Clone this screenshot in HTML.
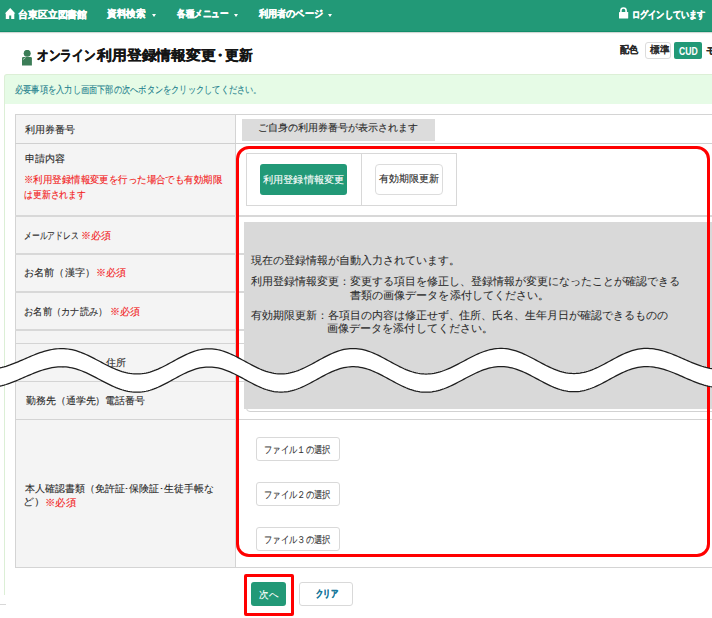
<!DOCTYPE html>
<html><head><meta charset="utf-8">
<style>
html,body{margin:0;padding:0;}
body{width:712px;height:618px;overflow:hidden;position:relative;background:#fff;font-family:"Liberation Sans",sans-serif;color:#222;}
.a{position:absolute;}
.tx{position:absolute;white-space:nowrap;line-height:14px;transform-origin:0 0;}
.caret{position:absolute;width:0;height:0;border-left:2.5px solid transparent;border-right:2.5px solid transparent;border-top:3px solid #fff;}
.hl{position:absolute;height:1px;background:#d4d4d4;}
.btnw{position:absolute;background:#fff;border:1px solid #d9d9d9;border-radius:3px;box-sizing:border-box;}
.btng{position:absolute;background:#229977;border-radius:3px;box-sizing:border-box;}
body.measure{overflow:visible;width:900px;}
body.measure *{visibility:hidden !important;}
body.measure .tx.on{visibility:visible !important;color:#000 !important;-webkit-text-stroke-color:#000 !important;}
</style></head><body>

<div class="a" style="left:0;top:0;width:712px;height:31px;background:#229977;border-bottom:1px solid #118d6a;box-shadow:0 1px 1px rgba(0,40,20,0.18);"></div>
<svg class="a" style="left:4px;top:7px" width="12" height="13" viewBox="0 0 12 13"><path d="M6.2 1 L11.4 6.6 L10.3 6.6 L10.3 11.9 L7.2 11.9 L7.2 8.6 L5.2 8.6 L5.2 11.9 L1.8 11.9 L1.8 6.6 L0.9 6.6 Z" fill="#fff"/></svg>
<div class="caret" style="left:152px;top:14px;"></div>
<div class="caret" style="left:233.5px;top:14px;"></div>
<div class="caret" style="left:327.5px;top:14px;"></div>
<svg class="a" style="left:618px;top:7px" width="11" height="12" viewBox="0 0 11 12"><path d="M2.9 5.5 V3.6 A2.6 2.6 0 0 1 8.1 3.6 V5.5" stroke="#fff" stroke-width="1.6" fill="none"/><rect x="1" y="5" width="9.2" height="6.6" rx="0.6" fill="#fff"/></svg>

<svg class="a" style="left:22px;top:50px" width="11" height="16" viewBox="0 0 11 16"><circle cx="5.2" cy="3.3" r="3.5" fill="#3b7d57"/><path d="M0 8.2 Q0 7 1.2 7 H8.7 Q9.9 7 9.9 8.2 V15.4 H0 Z" fill="#3b7d57"/><path d="M0.9 9.6 L3.6 7.6" stroke="#b9d6c0" stroke-width="0.9"/></svg>

<div class="btnw" style="left:645px;top:42px;width:26px;height:17px;border-color:#dcdcdc;"></div>
<div class="btng" style="left:674px;top:42px;width:28px;height:17px;border-radius:2px;"></div>

<!-- panel -->
<div class="a" style="left:4px;top:90px;width:1px;height:505px;background:#dcefd6;"></div>
<div class="a" style="left:4px;top:74px;width:720px;height:30px;background:#e6fbe6;border:1px solid #dcefd6;border-bottom:none;border-radius:3px 3px 0 0;box-sizing:border-box;"></div>

<!-- table -->
<div class="a" style="left:15px;top:114px;width:700px;height:454px;background:#fff;border:1px solid #d4d4d4;box-sizing:border-box;"></div>
<div class="a" style="left:16px;top:115px;width:219px;height:452px;background:#f4f4f4;"></div>
<div class="a" style="left:235px;top:114px;width:1px;height:454px;background:#d4d4d4;"></div>
<div class="hl" style="left:15px;top:143px;width:697px;background:#d0d0d0;"></div>
<div class="hl" style="left:15px;top:215px;width:697px;height:2px;background:#d8d8d8;"></div>
<div class="hl" style="left:15px;top:253px;width:697px;height:2px;background:#d8d8d8;"></div>
<div class="hl" style="left:15px;top:291px;width:697px;height:2px;background:#d8d8d8;"></div>
<div class="hl" style="left:15px;top:329px;width:697px;height:2px;background:#d8d8d8;"></div>
<div class="hl" style="left:15px;top:343px;width:697px;"></div>
<div class="hl" style="left:15px;top:381px;width:697px;"></div>
<div class="hl" style="left:15px;top:419px;width:697px;"></div>

<!-- readonly input -->
<div class="a" style="left:242px;top:119px;width:193px;height:22px;background:#dcdcdc;"></div>

<!-- tabs -->
<div class="a" style="left:246px;top:153px;width:211px;height:53px;border:1px solid #d8d8d8;box-sizing:border-box;"></div>
<div class="a" style="left:361px;top:153px;width:1px;height:53px;background:#d8d8d8;"></div>
<div class="btng" style="left:260px;top:164px;width:87px;height:31px;"></div>
<div class="btnw" style="left:375px;top:164px;width:68px;height:31px;border-color:#dcdcdc;border-radius:4px;"></div>

<!-- textarea + gray overlay -->
<div class="a" style="left:246px;top:222px;width:480px;height:190px;border:1px solid #d2d2d2;border-radius:4px;box-sizing:border-box;"></div>
<div class="a" style="left:244px;top:222px;width:480px;height:187px;background:#d9d9d9;"></div>

<!-- file buttons -->
<div class="btnw" style="left:256px;top:437px;width:84px;height:24px;"></div>
<div class="btnw" style="left:256px;top:482px;width:84px;height:24px;"></div>
<div class="btnw" style="left:256px;top:527px;width:84px;height:24px;"></div>

<!-- bottom -->
<div class="a" style="left:0px;top:604px;width:6px;height:1px;background:#d8d8d8;"></div>
<div class="btng" style="left:251px;top:582px;width:35px;height:24px;"></div>
<div class="btnw" style="left:299px;top:582px;width:54px;height:24px;"></div>

<div class="tx" id="n1" style="left:17.99px;top:7.70px;font-size:10px;color:#fff;font-weight:bold;-webkit-text-stroke:0.3px #fff;transform:scaleX(0.9892);">台東区立図書館</div>
<div class="tx" id="n2" style="left:107.43px;top:7.10px;font-size:10px;color:#fff;font-weight:bold;-webkit-text-stroke:0.3px #fff;transform:scaleX(0.9609);">資料検索</div>
<div class="tx" id="n3" style="left:176.77px;top:7.10px;font-size:10px;color:#fff;font-weight:bold;-webkit-text-stroke:0.3px #fff;transform:scaleX(0.8541);">各種メニュー</div>
<div class="tx" id="n4" style="left:258.56px;top:7.10px;font-size:10px;color:#fff;font-weight:bold;-webkit-text-stroke:0.3px #fff;transform:scaleX(0.9107);">利用者のページ</div>
<div class="tx" id="n5" style="left:631.72px;top:7.70px;font-size:10px;color:#fff;font-weight:bold;-webkit-text-stroke:0.3px #fff;transform:scaleX(0.8161);">ログインしています</div>
<div class="tx" id="ti1" style="left:37.08px;top:47.70px;font-size:14px;color:#151515;font-weight:bold;-webkit-text-stroke:0.3px #151515;transform:scaleX(0.8334);">オンライン</div>
<div class="tx" id="ti2" style="left:97.00px;top:47.70px;font-size:14px;color:#151515;font-weight:bold;-webkit-text-stroke:0.3px #151515;transform:scaleX(1.0607);">利用登録情報変更</div>
<div class="tx" id="ti3" style="left:213.20px;top:48.20px;font-size:14px;color:#151515;font-weight:bold;-webkit-text-stroke:0.3px #151515;">・</div>
<div class="tx" id="ti4" style="left:224.60px;top:48.20px;font-size:14px;color:#151515;font-weight:bold;-webkit-text-stroke:0.3px #151515;transform:scaleX(0.9787);">更新</div>
<div class="tx" id="c1" style="left:620.00px;top:43.20px;font-size:10px;color:#2a2a2a;font-weight:bold;-webkit-text-stroke:0.15px #2a2a2a;transform:scaleX(0.9126);">配色</div>
<div class="tx" id="c2" style="left:649.63px;top:43.20px;font-size:10px;color:#222;font-weight:normal;-webkit-text-stroke:0.45px #222;transform:scaleX(0.9585);">標準</div>
<div class="tx" id="c3" style="left:678.71px;top:44.60px;font-size:10px;color:#fff;font-weight:bold;-webkit-text-stroke:0.05px #fff;transform:scaleX(0.8624);">CUD</div>
<div class="tx" id="c4" style="left:705.80px;top:44.00px;font-size:10px;color:#2a2a2a;font-weight:bold;-webkit-text-stroke:0.15px #2a2a2a;">モ</div>
<div class="tx" id="al" style="left:14.92px;top:82.70px;font-size:10px;color:#1c7f8c;-webkit-text-stroke:0.1px #1c7f8c;transform:scaleX(0.8220);">必要事項を入力し画面下部の次へボタンをクリックしてください。</div>
<div class="tx" id="l1" style="left:25.38px;top:122.50px;font-size:10px;color:#2a2a2a;-webkit-text-stroke:0.1px #2a2a2a;transform:scaleX(1.0049);">利用券番号</div>
<div class="tx" id="l2" style="left:25.34px;top:152.30px;font-size:10px;color:#2a2a2a;-webkit-text-stroke:0.1px #2a2a2a;transform:scaleX(1.0054);">申請内容</div>
<div class="tx" id="l3" style="left:24.06px;top:173.30px;font-size:10px;color:#f21d1d;-webkit-text-stroke:0.12px #f21d1d;transform:scaleX(0.9426);">※利用登録情報変更を行った場合でも有効期限</div>
<div class="tx" id="l4" style="left:24.47px;top:187.70px;font-size:10px;color:#f21d1d;-webkit-text-stroke:0.12px #f21d1d;transform:scaleX(0.8834);">は更新されます</div>
<div class="tx" id="l5" style="left:24.29px;top:228.70px;font-size:10px;color:#2a2a2a;-webkit-text-stroke:0.1px #2a2a2a;transform:scaleX(0.7797);">メールアドレス</div>
<div class="tx" id="l5r" style="left:81.00px;top:228.70px;font-size:10px;color:#f21d1d;-webkit-text-stroke:0.12px #f21d1d;transform:scaleX(1.0048);">※必須</div>
<div class="tx" id="l6" style="left:24.07px;top:266.40px;font-size:10px;color:#2a2a2a;-webkit-text-stroke:0.1px #2a2a2a;transform:scaleX(1.0161);">お名前（漢字）</div>
<div class="tx" id="l6r" style="left:95.67px;top:266.40px;font-size:10px;color:#f21d1d;-webkit-text-stroke:0.12px #f21d1d;transform:scaleX(1.0054);">※必須</div>
<div class="tx" id="l7" style="left:24.16px;top:304.70px;font-size:10px;color:#2a2a2a;-webkit-text-stroke:0.1px #2a2a2a;transform:scaleX(0.9283);">お名前（カナ読み）</div>
<div class="tx" id="l7r" style="left:110.00px;top:304.70px;font-size:10px;color:#f21d1d;-webkit-text-stroke:0.12px #f21d1d;transform:scaleX(1.0048);">※必須</div>
<div class="tx" id="l8" style="left:56.00px;top:356.00px;font-size:10px;color:#2a2a2a;-webkit-text-stroke:0.1px #2a2a2a;">郵便番号・住所</div>
<div class="tx" id="l9" style="left:26.39px;top:393.70px;font-size:10px;color:#2a2a2a;-webkit-text-stroke:0.1px #2a2a2a;transform:scaleX(0.9918);">勤務先（通学先）電話番号</div>
<div class="tx" id="l10" style="left:25.30px;top:481.50px;font-size:10px;color:#2a2a2a;-webkit-text-stroke:0.1px #2a2a2a;transform:scaleX(0.9947);">本人確認書類（免許証･保険証･生徒手帳な</div>
<div class="tx" id="l11" style="left:23.06px;top:495.20px;font-size:10px;color:#2a2a2a;-webkit-text-stroke:0.1px #2a2a2a;transform:scaleX(1.0978);">ど）</div>
<div class="tx" id="l11r" style="left:44.96px;top:495.70px;font-size:10px;color:#f21d1d;-webkit-text-stroke:0.12px #f21d1d;transform:scaleX(1.0387);">※必須</div>
<div class="tx" id="ro" style="left:258.29px;top:121.00px;font-size:10px;color:#2a2a2a;-webkit-text-stroke:0.1px #2a2a2a;transform:scaleX(1.0003);">ご自身の利用券番号が表示されます</div>
<div class="tx" id="tb1" style="left:263.28px;top:173.00px;font-size:10px;color:#fff;-webkit-text-stroke:0.1px #fff;transform:scaleX(1.0135);">利用登録情報変更</div>
<div class="tx" id="tb2" style="left:379.33px;top:171.80px;font-size:10px;color:#2a2a2a;-webkit-text-stroke:0.1px #2a2a2a;transform:scaleX(1.0014);">有効期限更新</div>
<div class="tx" id="g1" style="left:251.41px;top:253.00px;font-size:11px;color:#2a2a2a;font-weight:normal;-webkit-text-stroke:0.05px #2a2a2a;">現在の登録情報が自動入力されています。</div>
<div class="tx" id="g2" style="left:251.40px;top:273.90px;font-size:11px;color:#2a2a2a;font-weight:normal;-webkit-text-stroke:0.05px #2a2a2a;">利用登録情報変更：変更する項目を修正し、登録情報が変更になったことが確認できる</div>
<div class="tx" id="g3" style="left:350.30px;top:287.50px;font-size:11px;color:#2a2a2a;font-weight:normal;-webkit-text-stroke:0.05px #2a2a2a;transform:scaleX(1.0053);">書類の画像データを添付してください。</div>
<div class="tx" id="g4" style="left:251.40px;top:308.30px;font-size:11px;color:#2a2a2a;font-weight:normal;-webkit-text-stroke:0.05px #2a2a2a;transform:scaleX(0.9976);">有効期限更新：各項目の内容は修正せず、住所、氏名、生年月日が確認できるものの</div>
<div class="tx" id="g5" style="left:327.40px;top:321.40px;font-size:11px;color:#2a2a2a;font-weight:normal;-webkit-text-stroke:0.05px #2a2a2a;transform:scaleX(1.0064);">画像データを添付してください。</div>
<div class="tx" id="f1" style="left:263.92px;top:442.90px;font-size:10px;color:#333;-webkit-text-stroke:0.1px #333;transform:scaleX(0.8338);">ファイル１の選択</div>
<div class="tx" id="f2" style="left:263.92px;top:487.60px;font-size:10px;color:#333;-webkit-text-stroke:0.1px #333;transform:scaleX(0.8338);">ファイル２の選択</div>
<div class="tx" id="f3" style="left:263.92px;top:532.50px;font-size:10px;color:#333;-webkit-text-stroke:0.1px #333;transform:scaleX(0.8338);">ファイル３の選択</div>
<div class="tx" id="b1" style="left:259.27px;top:587.50px;font-size:10px;color:#fff;-webkit-text-stroke:0.1px #fff;transform:scaleX(0.9567);">次へ</div>
<div class="tx" id="b2" style="left:315.54px;top:587.00px;font-size:10px;color:#1a7a9c;font-weight:bold;-webkit-text-stroke:0.35px #1a7a9c;transform:scaleX(0.7279);">クリア</div>

<!-- red rounded rects -->
<div class="a" style="left:236px;top:146px;width:474px;height:411px;border:3px solid #ff0000;border-radius:13px;box-sizing:border-box;"></div>
<div class="a" style="left:244px;top:574px;width:50px;height:42px;border:3px solid #ff0000;border-radius:2px;box-sizing:border-box;"></div>

<!-- wave -->
<svg class="a" style="left:0;top:330px" width="712" height="80" viewBox="0 330 712 80">
<path d="M-10.0 369.32 L-8.0 369.17 L-6.0 368.96 L-4.0 368.67 L-2.0 368.32 L0.0 367.90 L2.0 367.41 L4.0 366.87 L6.0 366.28 L8.0 365.63 L10.0 364.94 L12.0 364.20 L14.0 363.43 L16.0 362.63 L18.0 361.80 L20.0 360.95 L22.0 360.09 L24.0 359.22 L26.0 358.35 L28.0 357.48 L30.0 356.63 L32.0 355.79 L34.0 354.97 L36.0 354.18 L38.0 353.43 L40.0 352.71 L42.0 352.04 L44.0 351.42 L46.0 350.85 L48.0 350.34 L50.0 349.89 L52.0 349.50 L54.0 349.18 L56.0 348.93 L58.0 348.75 L60.0 348.64 L62.0 348.60 L64.0 348.64 L66.0 348.78 L68.0 349.00 L70.0 349.31 L72.0 349.70 L74.0 350.17 L76.0 350.72 L78.0 351.35 L80.0 352.04 L82.0 352.80 L84.0 353.62 L86.0 354.49 L88.0 355.42 L90.0 356.38 L92.0 357.38 L94.0 358.40 L96.0 359.44 L98.0 360.50 L100.0 361.57 L102.0 362.63 L104.0 363.68 L106.0 364.72 L108.0 365.73 L110.0 366.71 L112.0 367.65 L114.0 368.55 L116.0 369.40 L118.0 370.19 L120.0 370.91 L122.0 371.57 L124.0 372.16 L126.0 372.68 L128.0 373.11 L130.0 373.46 L132.0 373.72 L134.0 373.90 L136.0 373.99 L138.0 373.99 L140.0 373.89 L142.0 373.70 L144.0 373.42 L146.0 373.04 L148.0 372.58 L150.0 372.03 L152.0 371.40 L154.0 370.69 L156.0 369.91 L158.0 369.07 L160.0 368.17 L162.0 367.22 L164.0 366.22 L166.0 365.19 L168.0 364.13 L170.0 363.04 L172.0 361.95 L174.0 360.85 L176.0 359.76 L178.0 358.67 L180.0 357.61 L182.0 356.58 L184.0 355.58 L186.0 354.63 L188.0 353.73 L190.0 352.89 L192.0 352.11 L194.0 351.40 L196.0 350.77 L198.0 350.22 L200.0 349.76 L202.0 349.38 L204.0 349.10 L206.0 348.91 L208.0 348.81 L210.0 348.81 L212.0 348.91 L214.0 349.10 L216.0 349.38 L218.0 349.76 L220.0 350.22 L222.0 350.77 L224.0 351.39 L226.0 352.10 L228.0 352.87 L230.0 353.71 L232.0 354.61 L234.0 355.56 L236.0 356.55 L238.0 357.58 L240.0 358.63 L242.0 359.71 L244.0 360.80 L246.0 361.90 L248.0 362.99 L250.0 364.07 L252.0 365.12 L254.0 366.15 L256.0 367.14 L258.0 368.09 L260.0 368.99 L262.0 369.83 L264.0 370.60 L266.0 371.31 L268.0 371.93 L270.0 372.48 L272.0 372.94 L274.0 373.32 L276.0 373.60 L278.0 373.79 L280.0 373.89 L282.0 373.89 L284.0 373.79 L286.0 373.60 L288.0 373.31 L290.0 372.93 L292.0 372.47 L294.0 371.91 L296.0 371.28 L298.0 370.56 L300.0 369.78 L302.0 368.93 L304.0 368.02 L306.0 367.06 L308.0 366.06 L310.0 365.02 L312.0 363.95 L314.0 362.86 L316.0 361.75 L318.0 360.65 L320.0 359.54 L322.0 358.45 L324.0 357.38 L326.0 356.34 L328.0 355.34 L330.0 354.38 L332.0 353.47 L334.0 352.62 L336.0 351.84 L338.0 351.12 L340.0 350.49 L342.0 349.93 L344.0 349.47 L346.0 349.09 L348.0 348.80 L350.0 348.61 L352.0 348.51 L354.0 348.51 L356.0 348.61 L358.0 348.79 L360.0 349.07 L362.0 349.44 L364.0 349.90 L366.0 350.44 L368.0 351.07 L370.0 351.76 L372.0 352.53 L374.0 353.36 L376.0 354.25 L378.0 355.19 L380.0 356.18 L382.0 357.21 L384.0 358.26 L386.0 359.34 L388.0 360.43 L390.0 361.52 L392.0 362.62 L394.0 363.70 L396.0 364.77 L398.0 365.81 L400.0 366.82 L402.0 367.78 L404.0 368.70 L406.0 369.56 L408.0 370.36 L410.0 371.09 L412.0 371.76 L414.0 372.34 L416.0 372.84 L418.0 373.25 L420.0 373.58 L422.0 373.81 L424.0 373.95 L426.0 374.00 L428.0 373.96 L430.0 373.82 L432.0 373.60 L434.0 373.29 L436.0 372.89 L438.0 372.42 L440.0 371.86 L442.0 371.23 L444.0 370.53 L446.0 369.76 L448.0 368.94 L450.0 368.06 L452.0 367.13 L454.0 366.16 L456.0 365.16 L458.0 364.12 L460.0 363.07 L462.0 362.00 L464.0 360.93 L466.0 359.86 L468.0 358.80 L470.0 357.76 L472.0 356.74 L474.0 355.75 L476.0 354.80 L478.0 353.89 L480.0 353.04 L482.0 352.24 L484.0 351.51 L486.0 350.84 L488.0 350.25 L490.0 349.73 L492.0 349.30 L494.0 348.95 L496.0 348.68 L498.0 348.50 L500.0 348.41 L502.0 348.41 L504.0 348.50 L506.0 348.69 L508.0 348.97 L510.0 349.33 L512.0 349.78 L514.0 350.31 L516.0 350.93 L518.0 351.61 L520.0 352.37 L522.0 353.19 L524.0 354.06 L526.0 354.99 L528.0 355.96 L530.0 356.97 L532.0 358.01 L534.0 359.07 L536.0 360.14 L538.0 361.22 L540.0 362.30 L542.0 363.37 L544.0 364.42 L546.0 365.44 L548.0 366.43 L550.0 367.38 L552.0 368.28 L554.0 369.13 L556.0 369.92 L558.0 370.64 L560.0 371.29 L562.0 371.86 L564.0 372.36 L566.0 372.76 L568.0 373.08 L570.0 373.31 L572.0 373.45 L574.0 373.50 L576.0 373.45 L578.0 373.31 L580.0 373.07 L582.0 372.74 L584.0 372.32 L586.0 371.82 L588.0 371.23 L590.0 370.56 L592.0 369.82 L594.0 369.02 L596.0 368.15 L598.0 367.23 L600.0 366.25 L602.0 365.24 L604.0 364.20 L606.0 363.13 L608.0 362.04 L610.0 360.95 L612.0 359.86 L614.0 358.77 L616.0 357.70 L618.0 356.66 L620.0 355.65 L622.0 354.68 L624.0 353.75 L626.0 352.88 L628.0 352.08 L630.0 351.34 L632.0 350.67 L634.0 350.08 L636.0 349.58 L638.0 349.16 L640.0 348.83 L642.0 348.59 L644.0 348.45 L646.0 348.40 L648.0 348.44 L650.0 348.55 L652.0 348.73 L654.0 348.98 L656.0 349.31 L658.0 349.70 L660.0 350.15 L662.0 350.67 L664.0 351.25 L666.0 351.87 L668.0 352.55 L670.0 353.27 L672.0 354.04 L674.0 354.83 L676.0 355.66 L678.0 356.50 L680.0 357.37 L682.0 358.24 L684.0 359.12 L686.0 360.00 L688.0 360.87 L690.0 361.72 L692.0 362.56 L694.0 363.37 L696.0 364.15 L698.0 364.89 L700.0 365.59 L702.0 366.25 L704.0 366.85 L706.0 367.39 L708.0 367.88 L710.0 368.30 L712.0 368.66 L714.0 368.95 L716.0 369.17 L718.0 369.32 L720.0 369.39 L722.0 369.40 L724.0 369.40 L724.0 387.60 L722.0 387.60 L720.0 387.59 L718.0 387.52 L716.0 387.37 L714.0 387.15 L712.0 386.86 L710.0 386.50 L708.0 386.08 L706.0 385.59 L704.0 385.05 L702.0 384.45 L700.0 383.79 L698.0 383.09 L696.0 382.35 L694.0 381.57 L692.0 380.76 L690.0 379.92 L688.0 379.07 L686.0 378.20 L684.0 377.32 L682.0 376.44 L680.0 375.57 L678.0 374.70 L676.0 373.86 L674.0 373.03 L672.0 372.24 L670.0 371.47 L668.0 370.75 L666.0 370.07 L664.0 369.45 L662.0 368.87 L660.0 368.35 L658.0 367.90 L656.0 367.51 L654.0 367.18 L652.0 366.93 L650.0 366.75 L648.0 366.64 L646.0 366.60 L644.0 366.65 L642.0 366.79 L640.0 367.03 L638.0 367.36 L636.0 367.78 L634.0 368.28 L632.0 368.87 L630.0 369.54 L628.0 370.28 L626.0 371.08 L624.0 371.95 L622.0 372.88 L620.0 373.85 L618.0 374.86 L616.0 375.90 L614.0 376.97 L612.0 378.06 L610.0 379.15 L608.0 380.24 L606.0 381.33 L604.0 382.40 L602.0 383.44 L600.0 384.45 L598.0 385.43 L596.0 386.35 L594.0 387.22 L592.0 388.02 L590.0 388.76 L588.0 389.43 L586.0 390.02 L584.0 390.52 L582.0 390.94 L580.0 391.27 L578.0 391.51 L576.0 391.65 L574.0 391.70 L572.0 391.65 L570.0 391.51 L568.0 391.28 L566.0 390.96 L564.0 390.56 L562.0 390.06 L560.0 389.49 L558.0 388.84 L556.0 388.12 L554.0 387.33 L552.0 386.48 L550.0 385.58 L548.0 384.63 L546.0 383.64 L544.0 382.62 L542.0 381.57 L540.0 380.50 L538.0 379.42 L536.0 378.34 L534.0 377.27 L532.0 376.21 L530.0 375.17 L528.0 374.16 L526.0 373.19 L524.0 372.26 L522.0 371.39 L520.0 370.57 L518.0 369.81 L516.0 369.13 L514.0 368.51 L512.0 367.98 L510.0 367.53 L508.0 367.17 L506.0 366.89 L504.0 366.70 L502.0 366.61 L500.0 366.61 L498.0 366.70 L496.0 366.88 L494.0 367.15 L492.0 367.50 L490.0 367.93 L488.0 368.45 L486.0 369.04 L484.0 369.71 L482.0 370.44 L480.0 371.24 L478.0 372.09 L476.0 373.00 L474.0 373.95 L472.0 374.94 L470.0 375.96 L468.0 377.00 L466.0 378.06 L464.0 379.13 L462.0 380.20 L460.0 381.27 L458.0 382.32 L456.0 383.36 L454.0 384.36 L452.0 385.33 L450.0 386.26 L448.0 387.14 L446.0 387.96 L444.0 388.73 L442.0 389.43 L440.0 390.06 L438.0 390.62 L436.0 391.09 L434.0 391.49 L432.0 391.80 L430.0 392.02 L428.0 392.16 L426.0 392.20 L424.0 392.15 L422.0 392.01 L420.0 391.78 L418.0 391.45 L416.0 391.04 L414.0 390.54 L412.0 389.96 L410.0 389.29 L408.0 388.56 L406.0 387.76 L404.0 386.90 L402.0 385.98 L400.0 385.02 L398.0 384.01 L396.0 382.97 L394.0 381.90 L392.0 380.82 L390.0 379.72 L388.0 378.63 L386.0 377.54 L384.0 376.46 L382.0 375.41 L380.0 374.38 L378.0 373.39 L376.0 372.45 L374.0 371.56 L372.0 370.73 L370.0 369.96 L368.0 369.27 L366.0 368.64 L364.0 368.10 L362.0 367.64 L360.0 367.27 L358.0 366.99 L356.0 366.81 L354.0 366.71 L352.0 366.71 L350.0 366.81 L348.0 367.00 L346.0 367.29 L344.0 367.67 L342.0 368.13 L340.0 368.69 L338.0 369.32 L336.0 370.04 L334.0 370.82 L332.0 371.67 L330.0 372.58 L328.0 373.54 L326.0 374.54 L324.0 375.58 L322.0 376.65 L320.0 377.74 L318.0 378.85 L316.0 379.95 L314.0 381.06 L312.0 382.15 L310.0 383.22 L308.0 384.26 L306.0 385.26 L304.0 386.22 L302.0 387.13 L300.0 387.98 L298.0 388.76 L296.0 389.48 L294.0 390.11 L292.0 390.67 L290.0 391.13 L288.0 391.51 L286.0 391.80 L284.0 391.99 L282.0 392.09 L280.0 392.09 L278.0 391.99 L276.0 391.80 L274.0 391.52 L272.0 391.14 L270.0 390.68 L268.0 390.13 L266.0 389.51 L264.0 388.80 L262.0 388.03 L260.0 387.19 L258.0 386.29 L256.0 385.34 L254.0 384.35 L252.0 383.32 L250.0 382.27 L248.0 381.19 L246.0 380.10 L244.0 379.00 L242.0 377.91 L240.0 376.83 L238.0 375.78 L236.0 374.75 L234.0 373.76 L232.0 372.81 L230.0 371.91 L228.0 371.07 L226.0 370.30 L224.0 369.59 L222.0 368.97 L220.0 368.42 L218.0 367.96 L216.0 367.58 L214.0 367.30 L212.0 367.11 L210.0 367.01 L208.0 367.01 L206.0 367.11 L204.0 367.30 L202.0 367.58 L200.0 367.96 L198.0 368.42 L196.0 368.97 L194.0 369.60 L192.0 370.31 L190.0 371.09 L188.0 371.93 L186.0 372.83 L184.0 373.78 L182.0 374.78 L180.0 375.81 L178.0 376.87 L176.0 377.96 L174.0 379.05 L172.0 380.15 L170.0 381.24 L168.0 382.33 L166.0 383.39 L164.0 384.42 L162.0 385.42 L160.0 386.37 L158.0 387.27 L156.0 388.11 L154.0 388.89 L152.0 389.60 L150.0 390.23 L148.0 390.78 L146.0 391.24 L144.0 391.62 L142.0 391.90 L140.0 392.09 L138.0 392.19 L136.0 392.19 L134.0 392.10 L132.0 391.92 L130.0 391.66 L128.0 391.31 L126.0 390.88 L124.0 390.36 L122.0 389.77 L120.0 389.11 L118.0 388.39 L116.0 387.60 L114.0 386.75 L112.0 385.85 L110.0 384.91 L108.0 383.93 L106.0 382.92 L104.0 381.88 L102.0 380.83 L100.0 379.77 L98.0 378.70 L96.0 377.64 L94.0 376.60 L92.0 375.58 L90.0 374.58 L88.0 373.62 L86.0 372.69 L84.0 371.82 L82.0 371.00 L80.0 370.24 L78.0 369.55 L76.0 368.92 L74.0 368.37 L72.0 367.90 L70.0 367.51 L68.0 367.20 L66.0 366.98 L64.0 366.84 L62.0 366.80 L60.0 366.84 L58.0 366.95 L56.0 367.13 L54.0 367.38 L52.0 367.70 L50.0 368.09 L48.0 368.54 L46.0 369.05 L44.0 369.62 L42.0 370.24 L40.0 370.91 L38.0 371.63 L36.0 372.38 L34.0 373.17 L32.0 373.99 L30.0 374.83 L28.0 375.68 L26.0 376.55 L24.0 377.42 L22.0 378.29 L20.0 379.15 L18.0 380.00 L16.0 380.83 L14.0 381.63 L12.0 382.40 L10.0 383.14 L8.0 383.83 L6.0 384.48 L4.0 385.07 L2.0 385.61 L0.0 386.10 L-2.0 386.52 L-4.0 386.87 L-6.0 387.16 L-8.0 387.37 L-10.0 387.52 Z" fill="#fff"/>
<path d="M-10.0 369.32 L-8.0 369.17 L-6.0 368.96 L-4.0 368.67 L-2.0 368.32 L0.0 367.90 L2.0 367.41 L4.0 366.87 L6.0 366.28 L8.0 365.63 L10.0 364.94 L12.0 364.20 L14.0 363.43 L16.0 362.63 L18.0 361.80 L20.0 360.95 L22.0 360.09 L24.0 359.22 L26.0 358.35 L28.0 357.48 L30.0 356.63 L32.0 355.79 L34.0 354.97 L36.0 354.18 L38.0 353.43 L40.0 352.71 L42.0 352.04 L44.0 351.42 L46.0 350.85 L48.0 350.34 L50.0 349.89 L52.0 349.50 L54.0 349.18 L56.0 348.93 L58.0 348.75 L60.0 348.64 L62.0 348.60 L64.0 348.64 L66.0 348.78 L68.0 349.00 L70.0 349.31 L72.0 349.70 L74.0 350.17 L76.0 350.72 L78.0 351.35 L80.0 352.04 L82.0 352.80 L84.0 353.62 L86.0 354.49 L88.0 355.42 L90.0 356.38 L92.0 357.38 L94.0 358.40 L96.0 359.44 L98.0 360.50 L100.0 361.57 L102.0 362.63 L104.0 363.68 L106.0 364.72 L108.0 365.73 L110.0 366.71 L112.0 367.65 L114.0 368.55 L116.0 369.40 L118.0 370.19 L120.0 370.91 L122.0 371.57 L124.0 372.16 L126.0 372.68 L128.0 373.11 L130.0 373.46 L132.0 373.72 L134.0 373.90 L136.0 373.99 L138.0 373.99 L140.0 373.89 L142.0 373.70 L144.0 373.42 L146.0 373.04 L148.0 372.58 L150.0 372.03 L152.0 371.40 L154.0 370.69 L156.0 369.91 L158.0 369.07 L160.0 368.17 L162.0 367.22 L164.0 366.22 L166.0 365.19 L168.0 364.13 L170.0 363.04 L172.0 361.95 L174.0 360.85 L176.0 359.76 L178.0 358.67 L180.0 357.61 L182.0 356.58 L184.0 355.58 L186.0 354.63 L188.0 353.73 L190.0 352.89 L192.0 352.11 L194.0 351.40 L196.0 350.77 L198.0 350.22 L200.0 349.76 L202.0 349.38 L204.0 349.10 L206.0 348.91 L208.0 348.81 L210.0 348.81 L212.0 348.91 L214.0 349.10 L216.0 349.38 L218.0 349.76 L220.0 350.22 L222.0 350.77 L224.0 351.39 L226.0 352.10 L228.0 352.87 L230.0 353.71 L232.0 354.61 L234.0 355.56 L236.0 356.55 L238.0 357.58 L240.0 358.63 L242.0 359.71 L244.0 360.80 L246.0 361.90 L248.0 362.99 L250.0 364.07 L252.0 365.12 L254.0 366.15 L256.0 367.14 L258.0 368.09 L260.0 368.99 L262.0 369.83 L264.0 370.60 L266.0 371.31 L268.0 371.93 L270.0 372.48 L272.0 372.94 L274.0 373.32 L276.0 373.60 L278.0 373.79 L280.0 373.89 L282.0 373.89 L284.0 373.79 L286.0 373.60 L288.0 373.31 L290.0 372.93 L292.0 372.47 L294.0 371.91 L296.0 371.28 L298.0 370.56 L300.0 369.78 L302.0 368.93 L304.0 368.02 L306.0 367.06 L308.0 366.06 L310.0 365.02 L312.0 363.95 L314.0 362.86 L316.0 361.75 L318.0 360.65 L320.0 359.54 L322.0 358.45 L324.0 357.38 L326.0 356.34 L328.0 355.34 L330.0 354.38 L332.0 353.47 L334.0 352.62 L336.0 351.84 L338.0 351.12 L340.0 350.49 L342.0 349.93 L344.0 349.47 L346.0 349.09 L348.0 348.80 L350.0 348.61 L352.0 348.51 L354.0 348.51 L356.0 348.61 L358.0 348.79 L360.0 349.07 L362.0 349.44 L364.0 349.90 L366.0 350.44 L368.0 351.07 L370.0 351.76 L372.0 352.53 L374.0 353.36 L376.0 354.25 L378.0 355.19 L380.0 356.18 L382.0 357.21 L384.0 358.26 L386.0 359.34 L388.0 360.43 L390.0 361.52 L392.0 362.62 L394.0 363.70 L396.0 364.77 L398.0 365.81 L400.0 366.82 L402.0 367.78 L404.0 368.70 L406.0 369.56 L408.0 370.36 L410.0 371.09 L412.0 371.76 L414.0 372.34 L416.0 372.84 L418.0 373.25 L420.0 373.58 L422.0 373.81 L424.0 373.95 L426.0 374.00 L428.0 373.96 L430.0 373.82 L432.0 373.60 L434.0 373.29 L436.0 372.89 L438.0 372.42 L440.0 371.86 L442.0 371.23 L444.0 370.53 L446.0 369.76 L448.0 368.94 L450.0 368.06 L452.0 367.13 L454.0 366.16 L456.0 365.16 L458.0 364.12 L460.0 363.07 L462.0 362.00 L464.0 360.93 L466.0 359.86 L468.0 358.80 L470.0 357.76 L472.0 356.74 L474.0 355.75 L476.0 354.80 L478.0 353.89 L480.0 353.04 L482.0 352.24 L484.0 351.51 L486.0 350.84 L488.0 350.25 L490.0 349.73 L492.0 349.30 L494.0 348.95 L496.0 348.68 L498.0 348.50 L500.0 348.41 L502.0 348.41 L504.0 348.50 L506.0 348.69 L508.0 348.97 L510.0 349.33 L512.0 349.78 L514.0 350.31 L516.0 350.93 L518.0 351.61 L520.0 352.37 L522.0 353.19 L524.0 354.06 L526.0 354.99 L528.0 355.96 L530.0 356.97 L532.0 358.01 L534.0 359.07 L536.0 360.14 L538.0 361.22 L540.0 362.30 L542.0 363.37 L544.0 364.42 L546.0 365.44 L548.0 366.43 L550.0 367.38 L552.0 368.28 L554.0 369.13 L556.0 369.92 L558.0 370.64 L560.0 371.29 L562.0 371.86 L564.0 372.36 L566.0 372.76 L568.0 373.08 L570.0 373.31 L572.0 373.45 L574.0 373.50 L576.0 373.45 L578.0 373.31 L580.0 373.07 L582.0 372.74 L584.0 372.32 L586.0 371.82 L588.0 371.23 L590.0 370.56 L592.0 369.82 L594.0 369.02 L596.0 368.15 L598.0 367.23 L600.0 366.25 L602.0 365.24 L604.0 364.20 L606.0 363.13 L608.0 362.04 L610.0 360.95 L612.0 359.86 L614.0 358.77 L616.0 357.70 L618.0 356.66 L620.0 355.65 L622.0 354.68 L624.0 353.75 L626.0 352.88 L628.0 352.08 L630.0 351.34 L632.0 350.67 L634.0 350.08 L636.0 349.58 L638.0 349.16 L640.0 348.83 L642.0 348.59 L644.0 348.45 L646.0 348.40 L648.0 348.44 L650.0 348.55 L652.0 348.73 L654.0 348.98 L656.0 349.31 L658.0 349.70 L660.0 350.15 L662.0 350.67 L664.0 351.25 L666.0 351.87 L668.0 352.55 L670.0 353.27 L672.0 354.04 L674.0 354.83 L676.0 355.66 L678.0 356.50 L680.0 357.37 L682.0 358.24 L684.0 359.12 L686.0 360.00 L688.0 360.87 L690.0 361.72 L692.0 362.56 L694.0 363.37 L696.0 364.15 L698.0 364.89 L700.0 365.59 L702.0 366.25 L704.0 366.85 L706.0 367.39 L708.0 367.88 L710.0 368.30 L712.0 368.66 L714.0 368.95 L716.0 369.17 L718.0 369.32 L720.0 369.39 L722.0 369.40 L724.0 369.40" fill="none" stroke="#1e1e1e" stroke-width="1.25"/>
<path d="M-10.0 387.52 L-8.0 387.37 L-6.0 387.16 L-4.0 386.87 L-2.0 386.52 L0.0 386.10 L2.0 385.61 L4.0 385.07 L6.0 384.48 L8.0 383.83 L10.0 383.14 L12.0 382.40 L14.0 381.63 L16.0 380.83 L18.0 380.00 L20.0 379.15 L22.0 378.29 L24.0 377.42 L26.0 376.55 L28.0 375.68 L30.0 374.83 L32.0 373.99 L34.0 373.17 L36.0 372.38 L38.0 371.63 L40.0 370.91 L42.0 370.24 L44.0 369.62 L46.0 369.05 L48.0 368.54 L50.0 368.09 L52.0 367.70 L54.0 367.38 L56.0 367.13 L58.0 366.95 L60.0 366.84 L62.0 366.80 L64.0 366.84 L66.0 366.98 L68.0 367.20 L70.0 367.51 L72.0 367.90 L74.0 368.37 L76.0 368.92 L78.0 369.55 L80.0 370.24 L82.0 371.00 L84.0 371.82 L86.0 372.69 L88.0 373.62 L90.0 374.58 L92.0 375.58 L94.0 376.60 L96.0 377.64 L98.0 378.70 L100.0 379.77 L102.0 380.83 L104.0 381.88 L106.0 382.92 L108.0 383.93 L110.0 384.91 L112.0 385.85 L114.0 386.75 L116.0 387.60 L118.0 388.39 L120.0 389.11 L122.0 389.77 L124.0 390.36 L126.0 390.88 L128.0 391.31 L130.0 391.66 L132.0 391.92 L134.0 392.10 L136.0 392.19 L138.0 392.19 L140.0 392.09 L142.0 391.90 L144.0 391.62 L146.0 391.24 L148.0 390.78 L150.0 390.23 L152.0 389.60 L154.0 388.89 L156.0 388.11 L158.0 387.27 L160.0 386.37 L162.0 385.42 L164.0 384.42 L166.0 383.39 L168.0 382.33 L170.0 381.24 L172.0 380.15 L174.0 379.05 L176.0 377.96 L178.0 376.87 L180.0 375.81 L182.0 374.78 L184.0 373.78 L186.0 372.83 L188.0 371.93 L190.0 371.09 L192.0 370.31 L194.0 369.60 L196.0 368.97 L198.0 368.42 L200.0 367.96 L202.0 367.58 L204.0 367.30 L206.0 367.11 L208.0 367.01 L210.0 367.01 L212.0 367.11 L214.0 367.30 L216.0 367.58 L218.0 367.96 L220.0 368.42 L222.0 368.97 L224.0 369.59 L226.0 370.30 L228.0 371.07 L230.0 371.91 L232.0 372.81 L234.0 373.76 L236.0 374.75 L238.0 375.78 L240.0 376.83 L242.0 377.91 L244.0 379.00 L246.0 380.10 L248.0 381.19 L250.0 382.27 L252.0 383.32 L254.0 384.35 L256.0 385.34 L258.0 386.29 L260.0 387.19 L262.0 388.03 L264.0 388.80 L266.0 389.51 L268.0 390.13 L270.0 390.68 L272.0 391.14 L274.0 391.52 L276.0 391.80 L278.0 391.99 L280.0 392.09 L282.0 392.09 L284.0 391.99 L286.0 391.80 L288.0 391.51 L290.0 391.13 L292.0 390.67 L294.0 390.11 L296.0 389.48 L298.0 388.76 L300.0 387.98 L302.0 387.13 L304.0 386.22 L306.0 385.26 L308.0 384.26 L310.0 383.22 L312.0 382.15 L314.0 381.06 L316.0 379.95 L318.0 378.85 L320.0 377.74 L322.0 376.65 L324.0 375.58 L326.0 374.54 L328.0 373.54 L330.0 372.58 L332.0 371.67 L334.0 370.82 L336.0 370.04 L338.0 369.32 L340.0 368.69 L342.0 368.13 L344.0 367.67 L346.0 367.29 L348.0 367.00 L350.0 366.81 L352.0 366.71 L354.0 366.71 L356.0 366.81 L358.0 366.99 L360.0 367.27 L362.0 367.64 L364.0 368.10 L366.0 368.64 L368.0 369.27 L370.0 369.96 L372.0 370.73 L374.0 371.56 L376.0 372.45 L378.0 373.39 L380.0 374.38 L382.0 375.41 L384.0 376.46 L386.0 377.54 L388.0 378.63 L390.0 379.72 L392.0 380.82 L394.0 381.90 L396.0 382.97 L398.0 384.01 L400.0 385.02 L402.0 385.98 L404.0 386.90 L406.0 387.76 L408.0 388.56 L410.0 389.29 L412.0 389.96 L414.0 390.54 L416.0 391.04 L418.0 391.45 L420.0 391.78 L422.0 392.01 L424.0 392.15 L426.0 392.20 L428.0 392.16 L430.0 392.02 L432.0 391.80 L434.0 391.49 L436.0 391.09 L438.0 390.62 L440.0 390.06 L442.0 389.43 L444.0 388.73 L446.0 387.96 L448.0 387.14 L450.0 386.26 L452.0 385.33 L454.0 384.36 L456.0 383.36 L458.0 382.32 L460.0 381.27 L462.0 380.20 L464.0 379.13 L466.0 378.06 L468.0 377.00 L470.0 375.96 L472.0 374.94 L474.0 373.95 L476.0 373.00 L478.0 372.09 L480.0 371.24 L482.0 370.44 L484.0 369.71 L486.0 369.04 L488.0 368.45 L490.0 367.93 L492.0 367.50 L494.0 367.15 L496.0 366.88 L498.0 366.70 L500.0 366.61 L502.0 366.61 L504.0 366.70 L506.0 366.89 L508.0 367.17 L510.0 367.53 L512.0 367.98 L514.0 368.51 L516.0 369.13 L518.0 369.81 L520.0 370.57 L522.0 371.39 L524.0 372.26 L526.0 373.19 L528.0 374.16 L530.0 375.17 L532.0 376.21 L534.0 377.27 L536.0 378.34 L538.0 379.42 L540.0 380.50 L542.0 381.57 L544.0 382.62 L546.0 383.64 L548.0 384.63 L550.0 385.58 L552.0 386.48 L554.0 387.33 L556.0 388.12 L558.0 388.84 L560.0 389.49 L562.0 390.06 L564.0 390.56 L566.0 390.96 L568.0 391.28 L570.0 391.51 L572.0 391.65 L574.0 391.70 L576.0 391.65 L578.0 391.51 L580.0 391.27 L582.0 390.94 L584.0 390.52 L586.0 390.02 L588.0 389.43 L590.0 388.76 L592.0 388.02 L594.0 387.22 L596.0 386.35 L598.0 385.43 L600.0 384.45 L602.0 383.44 L604.0 382.40 L606.0 381.33 L608.0 380.24 L610.0 379.15 L612.0 378.06 L614.0 376.97 L616.0 375.90 L618.0 374.86 L620.0 373.85 L622.0 372.88 L624.0 371.95 L626.0 371.08 L628.0 370.28 L630.0 369.54 L632.0 368.87 L634.0 368.28 L636.0 367.78 L638.0 367.36 L640.0 367.03 L642.0 366.79 L644.0 366.65 L646.0 366.60 L648.0 366.64 L650.0 366.75 L652.0 366.93 L654.0 367.18 L656.0 367.51 L658.0 367.90 L660.0 368.35 L662.0 368.87 L664.0 369.45 L666.0 370.07 L668.0 370.75 L670.0 371.47 L672.0 372.24 L674.0 373.03 L676.0 373.86 L678.0 374.70 L680.0 375.57 L682.0 376.44 L684.0 377.32 L686.0 378.20 L688.0 379.07 L690.0 379.92 L692.0 380.76 L694.0 381.57 L696.0 382.35 L698.0 383.09 L700.0 383.79 L702.0 384.45 L704.0 385.05 L706.0 385.59 L708.0 386.08 L710.0 386.50 L712.0 386.86 L714.0 387.15 L716.0 387.37 L718.0 387.52 L720.0 387.59 L722.0 387.60 L724.0 387.60" fill="none" stroke="#1e1e1e" stroke-width="1.25"/>
</svg>

</body></html>
